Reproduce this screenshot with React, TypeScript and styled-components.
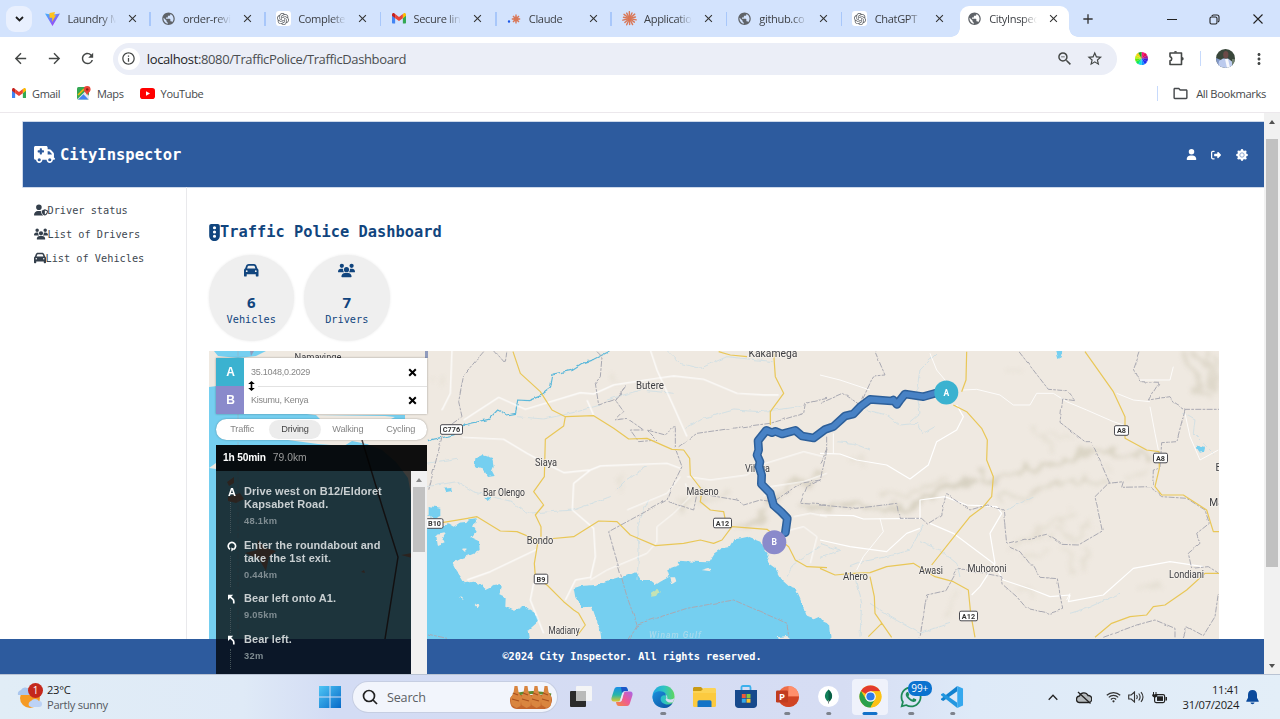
import React from 'react';
import styled, { createGlobalStyle, css } from 'styled-components';
import {
  FaTruckMedical, FaUserShield, FaUsers, FaCar, FaTrafficLight, FaUser, FaRightFromBracket,
} from 'react-icons/fa6';
import {
  MdArrowBack, MdArrowForward, MdRefresh, MdInfoOutline, MdStarOutline, MdPublic, MdClose, MdAdd,
  MdOutlineFolder, MdMoreVert, MdOutlineZoomOut,
} from 'react-icons/md';
import { SiOpenai } from 'react-icons/si';
import { FaWhatsapp } from 'react-icons/fa';

const UI = `"Open Sans", "Noto Sans", sans-serif`;
const MONO = `"DejaVu Sans Mono", monospace`;

const GlobalStyle = createGlobalStyle`
  * { box-sizing: border-box; }
  body { margin: 0; background: #fff; overflow: hidden; }
`;

const Screen = styled.div`
  width: 1280px;
  height: 719px;
  display: flex;
  flex-direction: column;
  overflow: hidden;
  font-family: ${UI};
  background: #fff;
`;

/* ---------- tab strip ---------- */

const TabStrip = styled.div`
  height: 37px;
  flex: none;
  background: #d3e3fd;
  display: flex;
  padding-left: 6px;
`;

const TabSearch = styled.div`
  width: 26px;
  height: 26px;
  margin: 6px 3.4px 0 0;
  border-radius: 9px;
  background: #e9f0fe;
  display: flex;
  align-items: center;
  justify-content: center;
`;

const Tab = styled.div<{ $active?: boolean; $rule?: boolean }>`
  position: relative;
  width: ${(p) => (p.$active ? 109.5 : 115.3)}px;
  margin-left: ${(p) => (p.$active ? 2.2 : 0)}px;
  margin-top: ${(p) => (p.$active ? 6 : 0)}px;
  height: ${(p) => (p.$active ? 31 : 37)}px;
  padding: ${(p) => (p.$active ? '0 0 6px 7px' : '0 0 0 10px')};
  display: flex;
  align-items: center;
  background: ${(p) => (p.$active ? '#fff' : 'transparent')};
  border-radius: 9px 9px 0 0;
  ${(p) => p.$rule && css`
    &::after {
      content: '';
      position: absolute;
      right: 0;
      top: 12px;
      width: 1.5px;
      height: 14px;
      background: #a8c7fa;
    }
  `}
  ${(p) => p.$active && css`
    &::before, &::after {
      content: '';
      position: absolute;
      bottom: 0;
      width: 9px;
      height: 9px;
    }
    &::before { left: -9px; background: radial-gradient(circle at 0 0, transparent 8.5px, #fff 9px); }
    &::after { right: -9px; background: radial-gradient(circle at 100% 0, transparent 8.5px, #fff 9px); }
  `}
`;

const TabIcon = styled.span<{ $boxed?: boolean }>`
  width: 15px;
  height: 15px;
  display: flex;
  align-items: center;
  justify-content: center;
  flex: none;
  border-radius: 3px;
  color: #5f6368;
  background: ${(p) => (p.$boxed ? '#fff' : 'transparent')};
`;

const TabTitle = styled.span`
  width: 49px;
  margin-left: 7.2px;
  overflow: hidden;
  white-space: nowrap;
  font-size: 11.1px;
  letter-spacing: -0.36px;
  color: #3e4146;
  mask-image: linear-gradient(90deg, #000 68%, transparent 98%);
`;

const TabClose = styled.span`
  margin-left: 9px;
  display: flex;
  font-size: 13px;
  color: #333;
  stroke: #333;
  stroke-width: 1;
`;

const NewTab = styled.div`
  width: 37px;
  height: 37px;
  display: flex;
  align-items: center;
  justify-content: center;
  font-size: 16px;
  color: #333;
`;

const WindowButtons = styled.div`
  margin-left: auto;
  display: flex;
  height: 37px;
`;

const WindowButton = styled.div`
  width: 43.4px;
  display: flex;
  align-items: center;
  justify-content: center;
  padding-top: 1px;
  svg { display: block; }
`;

/* ---------- toolbar ---------- */

const Toolbar = styled.div`
  height: 43px;
  flex: none;
  display: flex;
  align-items: center;
  padding: 0 0 0 4px;
  color: #444746;
`;

const NavButton = styled.div`
  width: 33.6px;
  flex: none;
  display: flex;
  justify-content: center;
  font-size: 17px;
`;

const Omnibox = styled.div`
  flex: none;
  margin-left: 8px;
  width: 1004px;
  height: 32px;
  border-radius: 16px;
  background: #ebeef7;
  display: flex;
  align-items: center;
  padding: 0 13px 0 5px;
`;

const SiteInfo = styled.div`
  width: 22px;
  height: 22px;
  border-radius: 50%;
  background: #fff;
  display: flex;
  align-items: center;
  justify-content: center;
  font-size: 15px;
`;

const Url = styled.div`
  margin-left: 7px;
  flex: 1;
  font-size: 13px;
  letter-spacing: -0.37px;
  color: #4a4d50;
  b { font-weight: 400; color: #1f1f1f; }
`;

const OmniIcon = styled.div`
  font-size: 17.5px;
  display: flex;
  margin-left: 13px;
`;

const ToolIcon = styled.div<{ $w: number }>`
  width: ${(p) => p.$w}px;
  flex: none;
  display: flex;
  justify-content: center;
  align-items: center;
  font-size: 18px;
`;

const VRule = styled.div`
  width: 1.5px;
  height: 15px;
  background: #c7dafc;
`;

/* ---------- bookmarks ---------- */

const Bookmarks = styled.div`
  height: 33px;
  flex: none;
  display: flex;
  align-items: center;
  padding: 0 14px 6px 12px;
  border-bottom: 1px solid #ece8ec;
  font-size: 11px;
  letter-spacing: -0.36px;
  color: #45484b;
`;

const Bookmark = styled.div<{ $gap?: number }>`
  display: flex;
  align-items: center;
  gap: 6px;
  margin-right: ${(p) => p.$gap ?? 0}px;
`;

const AllBookmarks = styled.div`
  margin-left: auto;
  display: flex;
  align-items: center;
  font-size: 11.2px;
  letter-spacing: -0.36px;
  svg { margin: 0 7px 0 14px; }
`;

/* ---------- page ---------- */

const Viewport = styled.div`
  height: 561px;
  flex: none;
  display: flex;
  overflow: hidden;
`;

const Page = styled.div`
  width: 1264px;
  display: flex;
  flex-direction: column;
  padding-top: 9px;
  font-family: ${MONO};
`;

const Header = styled.header`
  height: 65px;
  flex: none;
  margin-left: 22.5px;
  padding: 0 16.5px 0 11px;
  background: #2d5b9e;
  box-shadow: 0 0 0 0.7px #b9c9e2;
  display: flex;
  align-items: center;
  color: #fff;
`;

const Brand = styled.div`
  display: flex;
  align-items: center;
  gap: 5.5px;
  font-size: 15.5px;
  font-weight: 700;
`;

const HeaderActions = styled.div`
  margin-left: auto;
  display: flex;
  align-items: center;
  gap: 14.5px;
  font-size: 11px;
`;

const Body = styled.div`
  height: 452px;
  flex: none;
  display: flex;
  padding-left: 22.5px;
`;

const Sidebar = styled.nav`
  width: 164px;
  border-right: 1.5px solid #e9e9ec;
  padding: 11.3px 0 0 11px;
`;

const NavItem = styled.div`
  height: 23.8px;
  display: flex;
  align-items: center;
  font-size: 10.25px;
  color: #3d4751;
  svg { color: #343f4b; }
`;

const Main = styled.main`
  padding-left: 22.5px;
  color: #11457e;
`;

const Title = styled.h1`
  margin: 35px 0 0;
  height: 20px;
  display: flex;
  align-items: center;
  font-size: 15.35px;
  font-weight: 700;
  svg { width: 11px; height: 17px; }
`;

const Stats = styled.div`
  display: flex;
  gap: 10px;
  margin: 13px 0 0 -0.5px;
`;

const Stat = styled.div`
  width: 85.5px;
  height: 86px;
  border-radius: 50%;
  background: #efefef;
  box-shadow: 0 0 3px #e9e9e9;
  display: flex;
  flex-direction: column;
  align-items: center;
  padding-top: 6.5px;
`;

const StatIcon = styled.div`
  height: 17px;
  display: flex;
  align-items: center;
`;

const StatValue = styled.div`
  margin-top: 13px;
  height: 20px;
  line-height: 20px;
  font-family: "Noto Sans", sans-serif;
  font-size: 15px;
  font-weight: 700;
`;

const StatLabel = styled.div`
  height: 14px;
  line-height: 15px;
  font-size: 10.25px;
`;

const Footer = styled.footer`
  height: 35px;
  flex: none;
  background: #2d5b9e;
  color: #fff;
  display: flex;
  align-items: center;
  justify-content: center;
  padding-bottom: 1px;
  font-size: 10.25px;
  font-weight: 700;
`;

const ScrollTrack = styled.div`
  width: 16px;
  flex: none;
  background: #f1f1f1;
  display: flex;
  flex-direction: column;
  align-items: center;
`;

const ScrollThumb = styled.div<{ $h: number; $top: number }>`
  width: 12px;
  height: ${(p) => p.$h}px;
  margin-top: ${(p) => p.$top}px;
  background: #c1c1c1;
`;

const Arrow = styled.div<{ $down?: boolean; $tone: string }>`
  border: 3.5px solid transparent;
  border-top-width: ${(p) => (p.$down ? 4 : 0)}px;
  border-bottom-width: ${(p) => (p.$down ? 0 : 4)}px;
  border-${(p) => (p.$down ? 'top' : 'bottom')}-color: ${(p) => p.$tone};
  margin-top: ${(p) => (p.$down ? 'auto' : '7px')};
  margin-bottom: ${(p) => (p.$down ? '6px' : 0)};
`;

/* ---------- map ---------- */

const MapFrame = styled.div`
  position: relative;
  width: 1010px;
  height: 288px;
  margin-top: 10px;
`;

const MapSvg = styled.svg`
  display: block;
  width: 1010px;
  height: 288px;
`;

const Directions = styled.div`
  position: absolute;
  left: 7.4px;
  top: 7.4px;
  width: 210.6px;
  font-family: "Liberation Sans", sans-serif;
`;

const Inputs = styled.div`
  position: relative;
  box-shadow: 0 0 2px rgba(0, 0, 0, 0.35);
  background: #fff;
`;

const InputRow = styled.div`
  display: flex;
  height: 28px;
  align-items: center;
  font-size: 9px;
  letter-spacing: -0.25px;
  color: #868686;
`;

const Badge = styled.div<{ $tone: string }>`
  width: 28px;
  height: 28px;
  background: ${(p) => p.$tone};
  color: #fff;
  font-weight: 700;
  font-size: 12px;
  display: flex;
  align-items: center;
  justify-content: center;
  margin-right: 6.5px;
`;

const ClearX = styled.svg`
  margin-left: auto;
  margin-right: 10px;
  width: 9px;
  height: 9px;
`;

const Divider = styled.div`
  position: absolute;
  left: 42px;
  right: 0;
  top: 28px;
  height: 1px;
  background: #e2e2e2;
`;

const Swap = styled.svg`
  position: absolute;
  left: 31.5px;
  top: 22.5px;
  width: 7px;
  height: 10px;
`;

const Profiles = styled.div`
  margin-top: 4.5px;
  height: 21px;
  border-radius: 11px;
  background: #fff;
  box-shadow: 0 0 2px rgba(0, 0, 0, 0.35);
  display: flex;
  justify-content: space-between;
`;

const Profile = styled.div<{ $on?: boolean }>`
  width: 52px;
  height: 19px;
  margin-top: 1px;
  border-radius: 10px;
  background: ${(p) => (p.$on ? '#ececec' : 'transparent')};
  color: ${(p) => (p.$on ? '#454545' : '#868686')};
  font-size: 9.2px;
  letter-spacing: -0.15px;
  display: flex;
  align-items: center;
  justify-content: center;
  padding-right: 0.5px;
`;

const Summary = styled.div`
  margin-top: 5.6px;
  height: 26px;
  background: rgba(0, 0, 0, 0.94);
  display: flex;
  align-items: center;
  padding: 0 0 1px 6.5px;
  gap: 7px;
  font-size: 10.2px;
  letter-spacing: -0.15px;
  font-weight: 700;
  color: #fff;
  span { font-size: 10.3px; font-weight: 400; color: #9a9a9a; letter-spacing: 0; }
`;

const Instructions = styled.div`
  height: 203px;
  display: flex;
`;

const Steps = styled.div`
  width: 194.6px;
  background: rgba(0, 0, 0, 0.75);
  padding: 14px 0 0 10px;
  overflow: hidden;
`;

const Step = styled.div<{ $h: number }>`
  height: ${(p) => p.$h}px;
  display: flex;
  gap: 6px;
`;

const StepMark = styled.div`
  width: 11px;
  display: flex;
  flex-direction: column;
  align-items: center;
  color: #fff;
  font-size: 11px;
  font-weight: 700;
  line-height: 14px;
  svg { margin: 2px 0 1px; }
`;

const StepLine = styled.div`
  margin: 3px 3px 0 0;
  flex: 1;
  max-height: 31px;
  border-left: 1px dotted #45545a;
`;

const StepText = styled.div`
  margin-left: 0.5px;
  font-size: 11px;
  line-height: 13px;
  font-weight: 700;
  letter-spacing: 0.09px;
  color: #c9cfd1;
  white-space: pre;
`;

const StepDistance = styled.div`
  margin-top: 3.8px;
  font-size: 9.3px;
  line-height: 13px;
  letter-spacing: 0.33px;
  color: #7f8c91;
`;

/* ---------- taskbar ---------- */

const Taskbar = styled.div`
  height: 45px;
  flex: none;
  border-top: 1px solid #b9c3d3;
  background: linear-gradient(90deg, #e1edf6 0%, #dfeaf7 19%, #d3dcf4 26%, #d5dcf3 48%, #d6ddf3 66%, #deeaf8 76%, #e3eef8 100%);
  display: flex;
  align-items: center;
  color: #1c1c1c;
`;

const Weather = styled.div`
  width: 301.5px;
  padding-left: 16.5px;
  display: flex;
  align-items: center;
  gap: 3.5px;
`;

const TwoLines = styled.div<{ $right?: boolean }>`
  font-size: 11.2px;
  line-height: 15px;
  letter-spacing: -0.3px;
  padding-bottom: 1px;
  text-align: ${(p) => (p.$right ? 'right' : 'left')};
  div + div { color: ${(p) => (p.$right ? '#1c1c1c' : '#55595f')}; }
`;

const StartCell = styled.div`
  width: 51.5px;
  padding-left: 17px;
  display: flex;
`;

const SearchBox = styled.div`
  width: 204px;
  height: 29.5px;
  border-radius: 15px;
  background: #f2f5fc;
  box-shadow: 0 0 0 1px #c6cee2;
  display: flex;
  align-items: center;
  padding: 0 2px 0 9px;
  font-size: 12.6px;
  letter-spacing: -0.2px;
  color: #5c5f64;
  gap: 9px;
`;

const SearchArt = styled.svg`
  margin-left: auto;
`;

const Apps = styled.div`
  display: flex;
  height: 44px;
  margin-left: 3px;
`;

const AppCell = styled.div<{ $on?: boolean }>`
  width: 41.35px;
  display: flex;
  align-items: center;
  justify-content: center;
  position: relative;
  &::before {
    content: '';
    position: absolute;
    z-index: 0;
    inset: 4px 3px;
    border-radius: 4px;
    background: ${(p) => (p.$on ? '#eff2fb' : 'transparent')};
  }
  svg { position: relative; top: -0.5px; }
`;

const Running = styled.div<{ $wide?: boolean }>`
  position: absolute;
  bottom: 4.5px;
  left: 50%;
  transform: translateX(-50%);
  width: ${(p) => (p.$wide ? 15 : 5.5)}px;
  height: 3px;
  border-radius: 2px;
  background: ${(p) => (p.$wide ? '#1272c9' : '#7d828c')};
`;

const CountBadge = styled.div`
  position: absolute;
  left: 17px;
  top: 6px;
  width: 24px;
  height: 15px;
  border-radius: 7px;
  background: #0a72cf;
  color: #fff;
  font-size: 10px;
  line-height: 14px;
  text-align: center;
`;

const Tray = styled.div`
  margin-left: auto;
  padding-right: 15px;
  display: flex;
  align-items: center;
  svg { display: block; }
`;

const TrayStatus = styled.div`
  display: flex;
  align-items: center;
  margin-right: 3px;
`;

const TrayIcon = styled.div<{ $w: number }>`
  width: ${(p) => p.$w}px;
  display: flex;
  justify-content: center;
`;

const Clock = styled.div`
  width: 62px;
  display: flex;
  justify-content: flex-end;
`;

/* ---------- glyphs ---------- */

const Gmail = ({ w = 14 }: { w?: number }) => (
  <svg width={w} height={w * 0.76} viewBox="0 0 20 15">
    <path d="M0 2v11.6c0 .8.6 1.4 1.4 1.4H4.500V7z" fill="#4285f4" />
    <path d="M15.500 15h3.100c.8 0 1.400-.6 1.400-1.400V2l-4.500 5z" fill="#34a853" />
    <path d="M15.500 1.400V7.400L20 4V2.200C20 .3 17.900-.7 16.400.5z" fill="#fbbc04" />
    <path d="M4.500 7.400V1.400L10 5.500l5.500-4.100v6L10 11.500z" fill="#ea4335" />
    <path d="M0 2.200V4l4.500 3.400V1.400L3.600.5C2.100-.7 0 .3 0 2.200z" fill="#c5221f" />
  </svg>
);

const Vite = () => (
  <svg width="15" height="14" viewBox="0 0 15 14">
    <defs>
      <linearGradient id="vt" x1="0" y1="0" x2=".7" y2="1"><stop stopColor="#41b6ff" /><stop offset="1" stopColor="#a23df5" /></linearGradient>
    </defs>
    <path d="M0 1.500L7.500 14 15 1.500 7.500 2.700z" fill="url(#vt)" />
    <path d="M4.500 1L10 0 9 3.200h2L7 10l.3-4.200H4.600z" fill="#ffc31f" />
  </svg>
);

const Burst = ({ size, rays }: { size: number; rays: number }) => (
  <svg width={size} height={size} viewBox="-8 -8 16 16" stroke="#d97757" strokeWidth="1.500" strokeLinecap="round">
    {Array.from({ length: rays }, (_, i) => {
      const a = (i * 2 * Math.PI) / rays + 0.2;
      const r = i % 2 ? 6.5 : 7.3;
      return <line key={i} x1="0" y1="0" x2={Math.cos(a) * r} y2={Math.sin(a) * r} />;
    })}
  </svg>
);

const ClaudeLoading = () => (
  <svg width="14" height="14" viewBox="0 0 14 14">
    <g stroke="#d97757" strokeWidth="1.400">
      <path d="M9 2.500v9M4.800 7h8.400M6 4l6 6M12 4l-6 6" />
    </g>
    <circle cx="9" cy="7" r="2.500" fill="#d97757" />
    <circle cx="2" cy="9.500" r="1.200" fill="#1a56e8" />
  </svg>
);

const MapsPin = () => (
  <svg width="14" height="14" viewBox="0 0 14 14">
    <rect x="0" y="1" width="12" height="12.500" rx="1.500" fill="#34a853" />
    <path d="M0 13.500L8 5.500l4 4v4z" fill="#e8eaed" />
    <path d="M1 13.500l5.500-5.300 5 5.300z" fill="#4285f4" />
    <path d="M1 9l6-6" stroke="#fbbc04" strokeWidth="1.400" />
    <path d="M10.200 0a3.400 3.400 0 0 0-3.400 3.400c0 2.400 2.600 3 3.400 6 .8-3 3.400-3.600 3.400-6A3.400 3.400 0 0 0 10.200 0z" fill="#ea4335" />
    <circle cx="10.200" cy="3.400" r="1.200" fill="#8c1d14" />
  </svg>
);

const YouTube = () => (
  <svg width="15" height="11" viewBox="0 0 15 11">
    <rect width="15" height="11" rx="2.800" fill="#f00" />
    <path d="M6 3.200l4 2.300-4 2.300z" fill="#fff" />
  </svg>
);

const wheelTones = [
  '#b81ad0', '#ff0d8c', '#e01020', '#c01050', '#10b020', '#f4e010', '#a8f010', '#30e810', '#10e8a0', '#12d8e8', '#1540f4', '#4a1fd8',
];

const ColorWheel = () => (
  <svg width="13" height="13" viewBox="-7 -7 14 14">
    {['#ff1080', '#e0104c', '#b01890', '#3a1fd8', '#1f2cf0', '#1590ff', '#12d8e8', '#10e860', '#60e810', '#c8f010', '#f4d010', '#20a020'].map((c, i) => {
      const a = (i * Math.PI) / 6 - Math.PI / 2;
      const b = a + Math.PI / 6 + 0.02;
      return <path key={i} fill={c || wheelTones[i]} d={`M0 0L${7 * Math.cos(a)} ${7 * Math.sin(a)}A7 7 0 0 1 ${7 * Math.cos(b)} ${7 * Math.sin(b)}z`} />;
    })}
  </svg>
);

const Puzzle = () => (
  <svg width="17" height="17" viewBox="0 0 17 17" fill="none" stroke="#444746" strokeWidth="1.600">
    <path d="M2 3h11.500v11.500H2v-3.600a2.200 2.200 0 0 0 0-4.300z" strokeLinejoin="round" />
    <path d="M5.800 2.600a1.700 1.700 0 0 1 3.400 0zM14 7a1.700 1.700 0 0 1 0 3.400z" fill="#444746" stroke="none" />
  </svg>
);

const Avatar = () => (
  <svg width="19" height="19" viewBox="0 0 19 19">
    <clipPath id="av"><circle cx="9.500" cy="9.500" r="9.500" /></clipPath>
    <g clipPath="url(#av)">
      <rect width="19" height="19" fill="#39463a" />
      <path d="M0 9l5 2v8H0z" fill="#8298c8" />
      <path d="M2 19l1-7 4-2.500h5l4 3 1 6.500z" fill="#bccbee" />
      <path d="M9 10h3l2 9h-3z" fill="#f8f9fd" />
      <ellipse cx="9.800" cy="5.800" rx="2.600" ry="3.700" fill="#6b4a47" />
      <path d="M16 10h3v9h-3z" fill="#6d7f6e" />
    </g>
  </svg>
);

const Gear = () => (
  <svg width="12" height="12" viewBox="-6 -6 12 12" fill="#fff">
    <circle r="4.600" />
    {Array.from({ length: 8 }, (_, i) => (
      <circle key={i} cx={4.6 * Math.cos((i * Math.PI) / 4)} cy={4.6 * Math.sin((i * Math.PI) / 4)} r="1.300" />
    ))}
    <circle r="2.200" fill="none" stroke="#7f9cc8" strokeWidth=".9" />
  </svg>
);

const Edge = () => (
  <svg width="23" height="23" viewBox="0 0 24 24">
    <defs>
      <linearGradient id="e1" x1="0" y1=".3" x2="1" y2=".3"><stop stopColor="#1fa5e4" /><stop offset=".55" stopColor="#2fc5c0" /><stop offset="1" stopColor="#5fd65c" /></linearGradient>
      <linearGradient id="e2" x1="0" y1="0" x2="1" y2="1"><stop stopColor="#1b8fdc" /><stop offset="1" stopColor="#0c4f9e" /></linearGradient>
    </defs>
    <circle cx="12" cy="12" r="11.500" fill="url(#e1)" />
    <path d="M.6 13C1 7.500 5.500 6.300 9 6.500c4 .2 6 2.800 6 5-2-1.800-6-1-6 3 0 4 4.500 6.500 9.500 5.500 1.500-.3 2.500-1 3-1A11.500 11.500 0 0 1 .6 13z" fill="url(#e2)" />
    <path d="M14.200 15c1.500-1.500 1-4-.8-5.200 2 .2 3.200 2.500 2.400 4.200 2.500 2 7 1 7.600-1-.2 2-.8 3.500-2 5-3 .8-6.500-.2-7.200-3z" fill="#d5dcf3" />
  </svg>
);

const Chrome = () => (
  <svg width="23" height="23" viewBox="-12 -12 24 24">
    <circle r="11.500" fill="#fbc116" />
    <path d="M0 0L-9.960 -5.750A11.500 11.500 0 0 1 9.960 -5.750L9.960-5.500H0z" fill="#e33b2e" />
    <path d="M-9.960 -5.750A11.500 11.500 0 0 0 0 11.500L4.700 2.800 0 0-4.700 2.800z" fill="#2aa14b" />
    <path d="M0-5.500h10A11.500 11.500 0 0 1 0 11.500l4.800-8.700z" fill="#fbc116" />
    <circle r="5.500" fill="#fff" />
    <circle r="4.300" fill="#2f7bea" />
  </svg>
);

const VSCode = () => (
  <svg width="23" height="22" viewBox="0 0 24 23">
    <path d="M17 0L0 13.200v1.300l2.300 1.200L17 5.500z" fill="#1181cf" />
    <path d="M17 23L0 9.800V8.500l2.300-1.200L17 17.500z" fill="#2297e0" />
    <path d="M17 0l6 2.600v17.800L17 23z" fill="#35a8ee" />
  </svg>
);

const Copilot = () => (
  <svg width="22" height="21" viewBox="0 0 22 21">
    <defs>
      <linearGradient id="c1" x1="0" y1="0" x2="0" y2="1"><stop stopColor="#1a8ee8" /><stop offset=".55" stopColor="#27b6a8" /><stop offset="1" stopColor="#e0c82a" /></linearGradient>
      <linearGradient id="c2" x1="1" y1="0" x2="0" y2="1"><stop stopColor="#a765ea" /><stop offset=".5" stopColor="#ee5a93" /><stop offset="1" stopColor="#f58a3c" /></linearGradient>
    </defs>
    <path d="M6 1h8c2 0 2.500 1.500 3 4h-3c-2 0-2.600 1-3 2.500L9.500 13C9 15 8 15.500 6 15.500H3c-2.500 0-3-2-2.400-4L3 4c.5-2 1.500-3 3-3z" fill="url(#c1)" />
    <path d="M10 1h4c2 0 2.500 1.500 3 4h-3c-2 0-2.600 1-3 2.500z" fill="#1c56c8" />
    <path d="M16 20H8c-2 0-2.500-1.500-3-4h3c2 0 2.600-1 3-2.500L12.500 8c.5-2 1.500-2.500 3.500-2.500h3c2.500 0 3 2 2.400 4L19 17c-.5 2-1.500 3-3 3z" fill="url(#c2)" />
    <path d="M9.500 13l2.300-6h1L11 13.500c-.4 1.300-.9 2-1.600 2.200z" fill="#e8eefb" />
  </svg>
);

/* ---------- map drawing ---------- */

type LabelProps = { x: number; y: number; w?: number; children: string };
const Place = ({ x, y, w, children }: LabelProps) => (
  <text x={x} y={y} textAnchor="middle" textLength={w} lengthAdjust="spacingAndGlyphs" fontFamily="Roboto, sans-serif" fontSize="10.200"
    fill="#3c3c40" stroke="#f4f0ea" strokeWidth="1.500" paintOrder="stroke">{children}</text>
);

const Shield = ({ x, y, w, children }: { x: number; y: number; w: number; children: string }) => (
  <g>
    <rect x={x - w / 2} y={y - 4.8} width={w} height="9.600" rx="1.500" fill="#fff" stroke="#4a4a50" strokeWidth="1" />
    <text x={x} y={y + 2.7} textAnchor="middle" fontFamily="Roboto, sans-serif" fontWeight="700" fontSize="7.300" fill="#333">{children}</text>
  </g>
);

const Pin = ({ x, y, tone, children }: { x: number; y: number; tone: string; children: string }) => (
  <g>
    <circle cx={x} cy={y} r="12" fill={tone} />
    <text x={x} y={y + 3} textAnchor="middle" fontFamily="Roboto, sans-serif" fontWeight="700" fontSize="8.500" fill="#fff">{children}</text>
  </g>
);

const WEST = 'translate(427 350) scale(.33333)';
const EAST = 'translate(820 350) scale(.33333)';

const ROUTE = 'M1075 548L1081 505 1062 485 1040 466 1030 430 1003 402 1004 375 996 350 999 335 990 315 995 300 993 272 1018 241 1035 248 1045 244 1065 252 1105 241 1125 258 1160 264 1179 250 1195 238 1219 230 1254 198 1279 192 1300 170 1329 148 1394 153 1399 150 1410 163 1418 152 1434 132 1489 140 1524 130 1557 127';

const RegionMap = () => (
  <MapSvg viewBox="209 351 1010 288">
    <defs>
      <filter id="relief" filterUnits="userSpaceOnUse" x="209" y="351" width="1010" height="288">
        <feTurbulence type="fractalNoise" baseFrequency=".06" numOctaves="2" seed="4" result="n" />
        <feDisplacementMap in="SourceGraphic" in2="n" scale="24" xChannelSelector="R" yChannelSelector="G" result="d" />
        <feGaussianBlur in="d" stdDeviation="2" />
      </filter>
      <filter id="shore" filterUnits="userSpaceOnUse" x="209" y="351" width="1010" height="288">
        <feTurbulence type="fractalNoise" baseFrequency=".15" numOctaves="2" seed="9" result="n" />
        <feDisplacementMap in="SourceGraphic" in2="n" scale="4" xChannelSelector="R" yChannelSelector="G" />
      </filter>
      <filter id="wander" filterUnits="userSpaceOnUse" x="209" y="351" width="1010" height="288">
        <feTurbulence type="fractalNoise" baseFrequency=".09" numOctaves="1" seed="3" result="n" />
        <feDisplacementMap in="SourceGraphic" in2="n" scale="3" xChannelSelector="R" yChannelSelector="G" />
      </filter>
    </defs>
    <rect x="209" y="351" width="1010" height="288" fill="#efe9e1" />

    {/* Lake Victoria shore and islands */}
    <path d="M214 351h52l-10 5-18 2-20-2zM209 387l8-1h28l30 24 40 5H405V421H360V441L382 450 396 462 408 478 412 500 427 540V639H209z" fill="#75cff0" />
    <path d="M250 351h4l-3 5zM425 351h3v7h-3z" fill="#8f9bbd" />
    <path d="M316 415l5 5h68l6-3-10-1zM288 440l30 4 26 2 8-5 20 4 20 3 20 18 15-12V440zM209 468l7-5v6z" fill="#efe9e1" />
    <path d="M227 482l7-5v6l-5 3zM258 540l8 8 10 3-7 6-3 14-7-12-14-6 12-3zM361 572l3-2 1 3zM401 555l11-2v5zM228 497l12-4 4 6-8 4-8-2z" fill="#ab8a7c" />
    <path d="M362 440l20 66 16 51-13 82" fill="none" stroke="#4a4244" strokeWidth="1.500" />
    <path d="M238 351V639" stroke="#a9aab4" strokeWidth=".7" strokeDasharray="5 2" fill="none" opacity=".7" />

    {/* hill shading */}
    <g filter="url(#relief)" fill="none" strokeLinecap="round" strokeLinejoin="round" opacity=".72">
      <g transform={EAST} stroke="#d8d2c2" strokeWidth="12">
        <path d="M-60 480L60 470 160 475 250 465 330 450 350 425 400 405 470 390" strokeWidth="16" stroke="#cfc9b7" />
        <path d="M180 435L300 420 380 390" opacity=".7" />
        <path d="M480 355L490 395 570 375 650 360 720 330 790 300 880 305 980 320" strokeWidth="14" stroke="#d3cdbb" />
        <path d="M540 445L620 430 690 405 760 385 860 405" />
        <path d="M570 585L620 565 690 530 740 510M700 550L760 560 820 530M750 480L740 530M620 630L680 600M740 600L760 660M800 590L790 660" opacity=".6" />
        <path d="M1090 20L1115 60 1130 95 1160 125M1130 10L1160 40 1170 80 1190 120M1190 40L1190 90" strokeWidth="18" />
        <path d="M640 240L700 300M690 240L740 270M90 320L130 350M850 350L880 370M600 720L640 740M420 730L380 800M950 710L1020 710M560 60L590 70M930 370L990 360" opacity=".5" />
      </g>
      <g transform={WEST} stroke="#d8d2c2" strokeWidth="12">
        <path d="M760 450L800 440 880 445 900 435M780 460L760 490" opacity=".8" />
        <path d="M1010 460L1060 430 1100 405 1150 380 1190 360M930 540L990 510 1020 490" stroke="#d3ccba" />
        <path d="M590 390L570 410M30 90L45 60M560 90L570 100M660 730L700 750" opacity=".5" />
      </g>
    </g>

    {/* lake and gulf */}
    <g filter="url(#shore)">
      <g transform={WEST} fill="#75cff0">
        <path d="M-20 523L15 535 25 522 50 528 62 520 80 530 98 518 118 516 125 508 148 505 150 516 135 528 146 545 133 562 156 572 158 600 138 612 105 625 76 640 86 660 100 680 112 700 140 695 165 705 175 717 200 705 222 702 224 715 216 735 236 745 235 770 262 782 290 768 325 790 333 815 305 840 310 880H-20z" />
        <path d="M440 715L460 708 505 705 540 692 575 682 605 676 625 667 640 690 665 690 685 705 700 695 727 680 720 658 757 645 752 632 800 635 845 637 862 610 885 595 912 590 925 568 960 560 1000 575 1012 598 1025 615 1018 635 1045 655 1065 690 1085 708 1105 715 1125 760 1140 800 1160 808 1177 800 1190 815 1206 822 1212 880H525L520 845 505 800 495 770 465 772 445 742z" />
        <path d="M145 325l25-12 25 8 5 30-5 12 8 15-20 3-15-25-25-8zM50 413l22-2 3 12-20 4zM5 468l35 5v25l-20 8-15-10zM172 440l20 3-10 10z" />
      </g>
      <g transform={WEST} fill="#efe9e1">
        <path d="M28 555l25-5-8 15 8 15-20 8zM100 740l8 6-4 4zM140 762l14-3 3 8-6 8zM105 595l10-3v12zM730 682l14 0 4 12-12 8zM1050 862l30-4 12 8-30 6zM822 660l20-6 10 10z" />
        <path d="M670 730l22-16 6 12-8 12-20 2z" fill="#c5e3b4" />
      </g>
      <path transform={EAST} d="M708 2h22l-5 20-10 5zM1130 283l12 8 13 3-3 12-12 2-8-12z" fill="#75cff0" />

      {/* streams */}
      <g fill="none" stroke="#c8dde5" strokeWidth="2.200" strokeLinejoin="round">
        <g transform={WEST}>
          <path d="M545 5L500 28 465 40 430 62 378 72 370 115 335 140 305 152 272 150 266 190 240 195 212 180 185 208 110 225 80 255 0 272" stroke="#5cb8da" strokeWidth="3.500" />
          <path d="M270 200L350 207 430 190 520 165M0 410L30 405 90 395 140 425 255 455 300 490 440 480 550 440 600 390 660 350M630 690L636 600 632 520 665 450M775 235L830 205 920 180 1000 185 1120 170M720 2L760 40 820 55 900 20 1040 35M540 150L640 120 740 130M1080 680L1100 640 1180 590M0 340L90 325" />
        </g>
        <g transform={EAST}>
          <path d="M350 10L300 60 290 120 300 190 270 215M140 180L200 195 240 225 290 220 310 250 345 230M50 275L100 280 150 300M0 625L60 600 0 580M90 650L130 635 220 615 270 600 310 525M300 575L360 600 410 640 420 680M110 690L125 760 120 860M150 760L210 800 300 850 390 820M560 480L640 440M750 790L800 775 900 730M1090 190L1125 210 1120 250 1180 310" />
        </g>
      </g>
    </g>

    {/* minor roads */}
    <g fill="none" stroke="#fff" strokeWidth="3.600" strokeLinejoin="round">
      <g transform={WEST}>
        <path d="M110 210L215 142 295 178 460 128 500 132 560 105 690 85 740 78 830 88 930 130 1010 135 1055 135M670 0L690 60 740 170 780 260M105 262L230 268 300 310 355 340 410 368 490 360 520 348 720 340 760 355M490 360L440 400 436 480 500 535 505 620 490 685M120 690L190 665 330 598M320 700L310 750 350 850M75 0L70 130 45 180M480 150L500 195M415 750L445 690 490 682" />
        <path d="M780 380L850 390 960 375 1000 345 1130 305 1190 320M490 690L540 660 660 610 690 575 690 530 740 490 790 440 775 400M1010 440L1030 410 1130 395 1200 370M1100 500L1150 490 1200 500M1090 540L1130 530 1170 560 1150 640M600 480L720 430 760 380" strokeWidth="2.800" />
      </g>
      <g transform={EAST}>
        <path d="M0 310L60 312 110 330 200 345 270 387 325 345 350 275 410 240 430 200 410 165M0 495L100 497 130 507 300 505 300 450 375 440 440 465 530 470 545 490 510 550 525 640 480 710 455 735M300 535L260 550 200 605 90 590 0 570M330 520L400 550 520 640 550 690 640 720 690 740 750 735 745 755 850 735 940 655 1050 635 1150 650" />
        <path d="M430 120L470 118 540 135 580 165 630 165 650 130 700 130 740 155 800 180 880 215 910 225M890 130L940 150 990 155M330 10L350 60 400 120M0 75L60 90 150 120M40 250L40 310M180 505L190 545 130 620 110 660M960 90L1050 90 1060 50M990 170L1005 250 1015 300M1095 190L1110 260 1140 330 1195 300M750 730L740 750" strokeWidth="2.500" />
      </g>
    </g>

    {/* district boundaries */}
    <g fill="none" stroke="#a9a9b2" strokeWidth="3" strokeDasharray="18 4 8 4" strokeLinejoin="round" filter="url(#wander)">
      <g transform={WEST}>
        <path d="M170 5L110 75 95 155 105 200 50 240 35 300 5 420M200 0L235 40 240 0M510 5L525 20 520 80 505 100 515 165 560 150 595 110 565 150 590 185 565 210 600 205 650 240 610 240 635 275 690 270 660 240 715 255 745 225 745 295 765 350 740 400 720 450 545 545 600 740 632 830M755 290L810 250 950 230 1030 220 1130 190 1135 160 1200 145M725 455L800 480 810 430 870 440 930 450 950 465 1000 450 1040 455 1120 400 1180 390M1200 300L1180 390 1140 410 1120 460 1200 465M632 822L780 775 920 750 1080 820 1085 860M632 825L605 870M0 852L60 865" />
      </g>
      <g transform={EAST}>
        <path d="M165 5L195 75 160 78 120 165 70 130 0 160M20 260L20 300 0 345M0 465L110 475 230 460 238 505 305 505 322 522 365 495 378 432 450 480 500 465 550 480 560 580 680 553 725 583 775 585 847 543 825 440 865 400 910 395 905 412 990 410 1025 440 1100 445 1155 480 1168 520 1130 550 1140 580 1105 610 1115 655 1165 650 1197 670M597 5L685 118 740 122 765 152 728 147 720 217 795 275 815 275 870 402M565 590L600 605 630 645 640 645 660 682 712 686 728 778 690 790 620 775 590 740 550 705 545 680 415 655 378 722 320 735 300 862M960 5L942 55 960 95 1018 97 985 150 1050 140 1060 155 1095 178 1197 178M1095 178L1070 275 1025 278 1020 355 1000 360 998 410M850 862L950 825 1005 810 1065 835 1065 862M1090 862L1100 830 1150 857 1185 800 1195 730" />
      </g>
    </g>

    {/* trunk roads */}
    <g fill="none" stroke="#e9c757" strokeWidth="3.600" strokeLinejoin="round">
      <g transform={WEST}>
        <path d="M258 5L280 70 340 125 375 180 415 200 500 197 560 235 605 267 660 265 735 298 770 300 788 325 790 375 825 420 820 455 850 480 890 485 895 510M415 200L410 228 355 268 352 380 320 425 350 465 325 495 342 530 342 560M0 530L45 518 150 500 220 543 270 545 330 570 440 560 515 513 570 515 610 555 685 587 770 580 820 570 860 580 885 570 915 530 1020 538 1085 590 1105 630 1140 650 1200 653M333 575L322 640 325 680 360 705 410 755 440 780 455 790 475 825 450 858M1040 10L1045 80 1070 130 1030 185 1030 225M875 5L910 15 960 20" />
      </g>
      <g transform={EAST}>
        <path d="M440 5L438 90 425 125M400 165L440 185 485 235 502 270 500 330 520 380 515 440 490 470 450 500 410 550 335 645M0 655L45 675 100 670 150 668 200 650 280 640 345 680 400 695 445 720 452 790 465 862M150 680L163 740 165 790 215 862M145 860L185 820M795 5L880 125 915 200 915 265 980 300 1017 305 1018 355 1005 410 1025 435 1090 435 1160 480 1180 545H1197M1197 670H1155L1100 720 1035 765 1000 770 980 795 930 800 875 820 825 862" />
      </g>
    </g>

    <g>
      <Place x={318} y={361} w={47}>Namayinge</Place>
      <Place x={773} y={357} w={49}>Kakamega</Place>
      <Place x={650} y={389} w={28}>Butere</Place>
      <Place x={546} y={466} w={22}>Siaya</Place>
      <Place x={504} y={495.5} w={42}>Bar Olengo</Place>
      <Place x={702.5} y={495} w={32}>Maseno</Place>
      <Place x={540} y={544} w={26.5}>Bondo</Place>
      <Place x={564} y={634} w={31}>Madiany</Place>
      <Place x={757.5} y={472} w={25}>Vihiga</Place>
      <Place x={855.5} y={580} w={25}>Ahero</Place>
      <Place x={931} y={574} w={24}>Awasi</Place>
      <Place x={987} y={572} w={39}>Muhoroni</Place>
      <Place x={1186.5} y={578} w={35}>Londiani</Place>
      <Place x={1218.5} y={471}>E</Place>
      <Place x={1216.5} y={506}>Ma</Place>
      <text x="649" y="637.500" textLength="52" fontFamily="Roboto, sans-serif" fontStyle="italic" fontSize="8.500" fontWeight="500" fill="#a9daec">Winam Gulf</text>
    </g>

    <g>
      <Shield x={451.5} y={429.5} w={22}>C776</Shield>
      <Shield x={434.5} y={523.5} w={17}>B10</Shield>
      <Shield x={541} y={579} w={13.5}>B9</Shield>
      <Shield x={722.5} y={523} w={18}>A12</Shield>
      <Shield x={1121.5} y={430.5} w={14}>A8</Shield>
      <Shield x={1160.5} y={458} w={14}>A8</Shield>
      <Shield x={968.5} y={616} w={18}>A12</Shield>
    </g>

    <g transform={WEST} fill="none" strokeLinecap="round" strokeLinejoin="round">
      <path d={ROUTE} stroke="#2d5f99" strokeWidth="26" />
      <path d={ROUTE} stroke="#4882c5" strokeWidth="17" />
    </g>
    <Pin x={946.3} y={392.5} tone="#3bb2d0">A</Pin>
    <Pin x={774.3} y={542.3} tone="#8a8acb">B</Pin>
  </MapSvg>
);

const Cross = () => (
  <ClearX viewBox="0 0 9 9"><path d="M1.200 1.200l6.600 6.600M7.800 1.200L1.200 7.800" stroke="#000" strokeWidth="2" /></ClearX>
);

const Roundabout = () => (
  <svg width="10" height="11" viewBox="0 0 10 11" fill="none" stroke="#fff" strokeWidth="1.700">
    <path d="M3 8.300A3.700 3.700 0 1 1 6.800 8.300" /><path d="M4.300 6.500v4L7.500 8z" fill="#fff" stroke="none" />
  </svg>
);

const BearLeft = () => (
  <svg width="9" height="10" viewBox="0 0 9 10">
    <path d="M1 .8h5.200L1 6z" fill="#fff" /><path d="M2.800 2.600l3 2.600c.8.700 1 1.300 1 2.200V9.500" fill="none" stroke="#fff" strokeWidth="1.700" />
  </svg>
);

const steps = [
  { mark: 'A', text: 'Drive west on B12/Eldoret\nKapsabet Road.', distance: '48.1km', h: 53.3 },
  { mark: <Roundabout />, text: 'Enter the roundabout and\ntake the 1st exit.', distance: '0.44km', h: 53.3 },
  { mark: <BearLeft />, text: 'Bear left onto A1.', distance: '9.05km', h: 41.2 },
  { mark: <BearLeft />, text: 'Bear left.', distance: '32m', h: 36 },
];

const tabs = [
  { title: 'Laundry M', icon: <Vite /> },
  { title: 'order-revi', icon: <MdPublic size={15.5} /> },
  { title: 'Complete', icon: <SiOpenai size={12} />, boxed: true },
  { title: 'Secure lin', icon: <Gmail /> },
  { title: 'Claude', icon: <ClaudeLoading /> },
  { title: 'Applicatio', icon: <Burst size={15} rays={14} /> },
  { title: 'github.co', icon: <MdPublic size={15.5} /> },
  { title: 'ChatGPT', icon: <SiOpenai size={12} />, boxed: true },
];

export default function App() {
  return (
    <Screen>
      <GlobalStyle />
      <TabStrip>
        <TabSearch>
          <svg width="9" height="6" fill="none" stroke="#1f1f1f" strokeWidth="1.800"><path d="M1 1l3.500 3.500L8 1" /></svg>
        </TabSearch>
        {tabs.map((t, i) => (
          <Tab key={i} $rule={i < 7}>
            <TabIcon $boxed={t.boxed}>{t.icon}</TabIcon>
            <TabTitle>{t.title}</TabTitle>
            <TabClose><MdClose /></TabClose>
          </Tab>
        ))}
        <Tab $active>
          <TabIcon><MdPublic size={15.5} /></TabIcon>
          <TabTitle>CityInspec</TabTitle>
          <TabClose><MdClose /></TabClose>
        </Tab>
        <NewTab><MdAdd /></NewTab>
        <WindowButtons>
          <WindowButton><svg width="10" height="10"><path d="M0 5.500h10" stroke="#222" /></svg></WindowButton>
          <WindowButton>
            <svg width="11" height="11" fill="none" stroke="#222" strokeWidth="1.100">
              <rect x="1" y="3" width="7" height="7" rx="1.500" /><path d="M3 2.200C3 1.500 3.500 1 4.500 1H8c1.200 0 2 .8 2 2v3.500c0 .8-.5 1.300-1 1.500" />
            </svg>
          </WindowButton>
          <WindowButton><svg width="10" height="10"><path d="M.5.5l9 9M9.500.5l-9 9" stroke="#222" strokeWidth="1.100" /></svg></WindowButton>
        </WindowButtons>
      </TabStrip>

      <Toolbar>
        <NavButton><MdArrowBack /></NavButton>
        <NavButton><MdArrowForward /></NavButton>
        <NavButton><MdRefresh /></NavButton>
        <Omnibox>
          <SiteInfo><MdInfoOutline /></SiteInfo>
          <Url><b>localhost</b>:8080/TrafficPolice/TrafficDashboard</Url>
          <OmniIcon><MdOutlineZoomOut /></OmniIcon>
          <OmniIcon><MdStarOutline /></OmniIcon>
        </Omnibox>
        <ToolIcon $w={49}><ColorWheel /></ToolIcon>
        <ToolIcon $w={21}><Puzzle /></ToolIcon>
        <ToolIcon $w={27}><VRule /></ToolIcon>
        <ToolIcon $w={23}><Avatar /></ToolIcon>
        <ToolIcon $w={44}><MdMoreVert /></ToolIcon>
      </Toolbar>

      <Bookmarks>
        <Bookmark $gap={17}><Gmail />Gmail</Bookmark>
        <Bookmark $gap={16}><MapsPin />Maps</Bookmark>
        <Bookmark><YouTube />YouTube</Bookmark>
        <AllBookmarks><VRule /><MdOutlineFolder size={17} />All Bookmarks</AllBookmarks>
      </Bookmarks>

      <Viewport>
        <Page>
          <Header>
            <Brand><FaTruckMedical size={21} />CityInspector</Brand>
            <HeaderActions><FaUser /><FaRightFromBracket size={10} /><Gear /></HeaderActions>
          </Header>
          <Body>
            <Sidebar>
              <NavItem><FaUserShield size={14} />Driver status</NavItem>
              <NavItem><FaUsers size={14} />List of Drivers</NavItem>
              <NavItem><FaCar size={12} />List of Vehicles</NavItem>
            </Sidebar>
            <Main>
              <Title><FaTrafficLight />Traffic Police Dashboard</Title>
              <Stats>
                <Stat><StatIcon><FaCar size={14.5} /></StatIcon><StatValue>6</StatValue><StatLabel>Vehicles</StatLabel></Stat>
                <Stat><StatIcon><FaUsers size={17} /></StatIcon><StatValue>7</StatValue><StatLabel>Drivers</StatLabel></Stat>
              </Stats>
              <MapFrame>
                <RegionMap />
                <Directions>
                  <Inputs>
                    <InputRow><Badge $tone="#3bb2d0">A</Badge>35.1048,0.2029<Cross /></InputRow>
                    <InputRow><Badge $tone="#8a8acb">B</Badge>Kisumu, Kenya<Cross /></InputRow>
                    <Divider />
                    <Swap viewBox="0 0 7 10"><path d="M3.500 0L6.800 3H4.300v4h2.500L3.500 10 .2 7h2.500V3H.2z" /></Swap>
                  </Inputs>
                  <Profiles>
                    <Profile>Traffic</Profile>
                    <Profile $on>Driving</Profile>
                    <Profile>Walking</Profile>
                    <Profile>Cycling</Profile>
                  </Profiles>
                  <Summary>1h 50min<span>79.0km</span></Summary>
                  <Instructions>
                    <Steps>
                      {steps.map((s, i) => (
                        <Step key={i} $h={s.h}>
                          <StepMark>{s.mark}<StepLine /></StepMark>
                          <StepText>{s.text}<StepDistance>{s.distance}</StepDistance></StepText>
                        </Step>
                      ))}
                    </Steps>
                    <ScrollTrack>
                      <Arrow $tone="#8a8a8a" />
                      <ScrollThumb $top={5} $h={65} />
                    </ScrollTrack>
                  </Instructions>
                </Directions>
              </MapFrame>
            </Main>
          </Body>
          <Footer>©2024 City Inspector. All rights reserved.</Footer>
        </Page>
        <ScrollTrack>
          <Arrow $tone="#505050" />
          <ScrollThumb $top={15} $h={428} />
          <Arrow $down $tone="#505050" />
        </ScrollTrack>
      </Viewport>

      <Taskbar>
        <Weather>
          <svg width="27" height="28" viewBox="0 0 27 28">
            <circle cx="13" cy="15" r="10" fill="#f59a23" />
            <path d="M1 12a4 4 0 0 1 3-5 5 5 0 0 1 8-1l2 6z" fill="#a9c6ee" />
            <path d="M12 23a3.500 3.500 0 0 1 2-5 5 5 0 0 1 8 0 3 3 0 0 1 0 6h-8z" fill="#bcd2f5" />
            <circle cx="18.500" cy="7.500" r="7.500" fill="#c4281c" />
            <text x="18.500" y="11" textAnchor="middle" fontSize="10" fill="#fff" fontFamily="Open Sans, sans-serif">1</text>
          </svg>
          <TwoLines><div>23°C</div><div>Partly sunny</div></TwoLines>
        </Weather>
        <StartCell>
          <svg width="22" height="22" viewBox="0 0 22 22">
            <defs><linearGradient id="w" x1="0" y1="0" x2="1" y2="1"><stop stopColor="#4fc6f5" /><stop offset="1" stopColor="#0669c8" /></linearGradient></defs>
            <path d="M0 0h10.500v10.500H0zM11.500 0H22v10.500H11.500zM0 11.500h10.500V22H0zM11.500 11.500H22V22H11.500z" fill="url(#w)" />
          </svg>
        </StartCell>
        <SearchBox>
          <svg width="16" height="16" viewBox="0 0 16 16" fill="none" stroke="#222" strokeWidth="1.700"><circle cx="7" cy="7" r="5.500" /><path d="M11 11l4 4" /></svg>
          Search
          <SearchArt width="46" height="26" viewBox="0 0 46 26">
            <path d="M1 16c0-3 2-5 5-5h33c4 0 5 5 3 9-1 4-4 5-8 5H8c-5 0-7-4-7-9z" fill="#c4652c" />
            <path d="M4 11q20-5 38 0" stroke="#5f8a2f" strokeWidth="3" fill="none" />
            {[7, 17, 27, 37].map((x) => (
              <g key={x}>
                <path d={`M${x - 1.5} 2l3 0 1 6 3 5-1 9-4 2-5-3-1-7 3-5z`} fill="#d9853f" />
                <path d={`M${x - 3} 9l5 2M${x - 4} 15l7 2`} stroke="#a84f1e" strokeWidth="1.200" />
              </g>
            ))}
          </SearchArt>
        </SearchBox>
        <Apps>
          <AppCell>
            <svg width="22" height="21" viewBox="0 0 22 21"><rect y="5" width="16" height="16" rx="1" fill="#2b2b2b" /><rect x="6" width="16" height="15" rx="1" fill="#f6f6f6" opacity=".92" /><rect x="6" y="5" width="10" height="10" fill="#b9bab9" /></svg>
          </AppCell>
          <AppCell><Copilot /></AppCell>
          <AppCell><Edge /><Running /></AppCell>
          <AppCell>
            <svg width="23" height="20" viewBox="0 0 23 20"><rect y="2.500" width="23" height="17.500" rx="1.500" fill="#fcca3f" /><path d="M0 2.500h8.500L11 1h10.500C22.500 1 23 1.600 23 2.500V6H0z" fill="#fcd354" /><path d="M0 1.500C0 .7.700 0 1.500 0H8l2 2-2 2H0z" fill="#c99a14" /><path d="M4.500 20v-5c0-1 .7-1.700 1.700-1.700h10.600c1 0 1.700.7 1.700 1.700v5z" fill="#1373c7" /></svg>
          </AppCell>
          <AppCell>
            <svg width="22" height="23" viewBox="0 0 22 23"><path d="M6.500 6V2.500c0-1 .5-1.500 1.500-1.500h6c1 0 1.500.5 1.500 1.500V6" fill="none" stroke="#3cb0ec" strokeWidth="1.800" /><path d="M0 5h22v14.500c0 2-1.500 3.500-3.500 3.500h-15C1.500 23 0 21.500 0 19.500z" fill="#17498c" /><path d="M6.800 9h4v4h-4z" fill="#ee5a3a" /><path d="M11.500 9h4v4h-4z" fill="#8ac53e" /><path d="M6.800 13.700h4v4h-4z" fill="#35a9e8" /><path d="M11.500 13.700h4v4h-4z" fill="#fcc52a" /></svg>
          </AppCell>
          <AppCell>
            <svg width="23" height="21" viewBox="0 0 23 21"><circle cx="12.500" cy="10.500" r="10.500" fill="#ed6c47" /><path d="M12.500 0A10.500 10.500 0 0 1 23 10.500H12.500z" fill="#ff8f6b" /><path d="M12.500 10.500H23A10.500 10.500 0 0 1 2.800 14.500z" fill="#d04423" /><rect y="4.500" width="12" height="12" rx="1.200" fill="#c13c1e" /><text x="6" y="13.800" textAnchor="middle" fontSize="9.500" fontWeight="700" fill="#fff" fontFamily="Open Sans, sans-serif">P</text></svg>
            <Running />
          </AppCell>
          <AppCell>
            <svg width="21" height="21" viewBox="0 0 21 21"><circle cx="10.500" cy="10.500" r="10.500" fill="#fff" /><path d="M10.500 3.500c4 3.500 5.500 8.500 0 12.500-5.500-4-4-9 0-12.500z" fill="#11805a" /><path d="M10.500 3.500c4 3.500 5.500 8.500 0 12.500z" fill="#0a5f45" /><path d="M10.500 14v3.500" stroke="#7a8a84" /></svg>
            <Running />
          </AppCell>
          <AppCell $on><Chrome /><Running $wide /></AppCell>
          <AppCell><FaWhatsapp size={24} color="#1e8a58" /><CountBadge>99+</CountBadge><Running /></AppCell>
          <AppCell><VSCode /><Running /></AppCell>
        </Apps>
        <Tray>
          <TrayStatus>
            <TrayIcon $w={30}><svg width="10" height="7" fill="none" stroke="#222" strokeWidth="1.300"><path d="M.7 5.700L5 1.300l4.300 4.400" /></svg></TrayIcon>
            <TrayIcon $w={31}>
              <svg width="16" height="13" viewBox="0 0 16 13" fill="#b5babd" stroke="#222" strokeWidth="1.300"><path d="M4 11.500A3.200 3.200 0 0 1 3.500 5 4.600 4.600 0 0 1 12 4.500a3.500 3.500 0 0 1 .5 7z" /><path d="M2 1l12.500 11.500" /></svg>
            </TrayIcon>
            <TrayIcon $w={29}>
              <svg width="15" height="12" viewBox="0 0 15 12" fill="none" stroke="#333" strokeWidth="1.200"><path d="M.8 4.300a9.500 9.500 0 0 1 13.400 0M2.800 6.400a6.600 6.600 0 0 1 9.400 0M4.900 8.500a3.700 3.700 0 0 1 5.200 0" /><circle cx="7.500" cy="10.300" r="1.100" fill="#333" stroke="none" /></svg>
            </TrayIcon>
            <TrayIcon $w={16}>
              <svg width="16" height="12" viewBox="0 0 16 12" fill="none" stroke="#333" strokeWidth="1.100"><path d="M.7 4h2.500L6.500 1v10L3.200 8H.7zM8.500 4q1.500 2 0 4M10.700 2.500q2.800 3.500 0 7M13 1.200q4 4.800 0 9.600" /></svg>
            </TrayIcon>
            <TrayIcon $w={30}>
              <svg width="15" height="13" viewBox="0 0 15 13"><rect x="2.600" y="3.600" width="10" height="8" rx="1.500" fill="none" stroke="#222" strokeWidth="1.200" /><rect x="5" y="5.300" width="6" height="4.600" fill="#222" /><path d="M13.500 6H15v3.500h-1.500z" fill="#222" /><path d="M0 3.500h1V1h1v2.500h1.500V1h1v2.500h1c0 2-1 3-2.500 3S0 5.500 0 3.500z" fill="#222" /></svg>
            </TrayIcon>
          </TrayStatus>
          <Clock><TwoLines $right><div>11:41</div><div>31/07/2024</div></TwoLines></Clock>
          <TrayIcon $w={26}>
            <svg width="13" height="15" viewBox="0 0 13 15" fill="#0b4a9c"><path d="M6.500 0C3.700 0 2 2 2 4.700v3L.3 11v.8h12.400V11L11 7.700v-3C11 2 9.300 0 6.500 0zM4.500 12.500h4c-.2 1.200-1 1.700-2 1.700s-1.800-.5-2-1.700z" /></svg>
          </TrayIcon>
        </Tray>
      </Taskbar>
    </Screen>
  );
}
